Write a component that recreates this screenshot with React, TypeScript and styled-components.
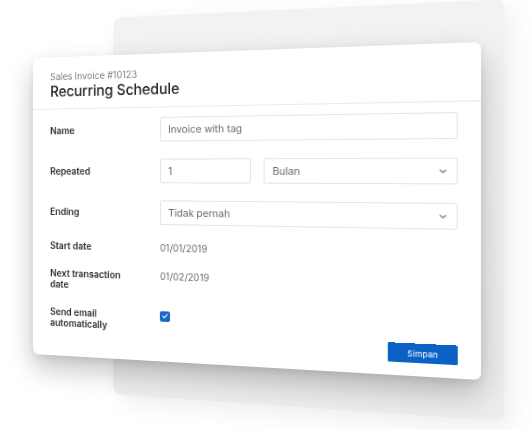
import React from 'react';
import styled, { createGlobalStyle, css } from 'styled-components';

const GlobalStyle = createGlobalStyle`
	html,
	body {
		margin: 0;
		padding: 0;
		background: #ffffff;
	}

	body {
		font-family: Inter, 'Liberation Sans', Arial, sans-serif;
		-webkit-font-smoothing: antialiased;
	}
`;

// Flat sheet -> tilted mockup plane (right side swings toward the viewer)
const TILT =
	'matrix3d(0.84398, -0.046128, 0, -0.00027013, 0, 0.910769, 0, 0, 0, 0, 1, 0, 33, 21.569, 0, 1)';

const Chevron = () => (
	<svg width="7" height="5" viewBox="0 0 7 5" fill="none">
		<polyline
			points="1,1.2 3.5,3.6 6,1.2"
			stroke="#7e7e82"
			strokeWidth="1.2"
			strokeLinecap="round"
			strokeLinejoin="round"
		/>
	</svg>
);

const Tick = () => (
	<svg width="7" height="6" viewBox="0 0 7 6" fill="none">
		<polyline
			points="1,3.2 2.8,4.8 6,1.2"
			stroke="#ffffff"
			strokeWidth="1.1"
			strokeLinecap="round"
			strokeLinejoin="round"
		/>
	</svg>
);

export default function App() {
	return (
		<>
			<GlobalStyle />
			<Stage>
				<Plane>
					<BackPanel />
					<Card>
						<Header>
							<Subtitle>Sales Invoice #10123</Subtitle>
							<Title>Recurring Schedule</Title>
						</Header>
						<Form>
							<Row>
								<Label>Name</Label>
								<Field>Invoice with tag</Field>
							</Row>
							<Row>
								<Label>Repeated</Label>
								<Pair>
									<Field>1</Field>
									<Field>
										Bulan
										<Chevron />
									</Field>
								</Pair>
							</Row>
							<Row>
								<Label>Ending</Label>
								<Field>
									Tidak pernah
									<Chevron />
								</Field>
							</Row>
							<Row $top>
								<Label>Start date</Label>
								<Value>01/01/2019</Value>
							</Row>
							<Row $top>
								<Label>
									Next transaction
									<br />
									date
								</Label>
								<Value>01/02/2019</Value>
							</Row>
							<Row $top>
								<Label>
									Send email
									<br />
									automatically
								</Label>
								<Checkbox>
									<Tick />
								</Checkbox>
							</Row>
						</Form>
						<Footer>
							<SaveButton type="button">Simpan</SaveButton>
						</Footer>
					</Card>
				</Plane>
			</Stage>
		</>
	);
}

const Stage = styled.div`
	width: 532px;
	height: 430px;
	overflow: hidden;
`;

const Plane = styled.div`
	width: 481px;
	height: 403px;
	display: grid;
	transform: ${TILT};
	transform-origin: 0 0;
`;

const BackPanel = styled.div`
	grid-area: 1 / 1;
	justify-self: end;
	width: 389px;
	height: 403px;
	border-radius: 8px;
	background: linear-gradient(180deg, #f2f2f3 0%, #ededee 100%);
	box-shadow: 6px 8px 24px rgba(0, 0, 0, 0.07);
`;

const Card = styled.div`
	grid-area: 1 / 1;
	align-self: start;
	margin-top: 40px;
	width: 460px;
	height: 325px;
	display: flex;
	flex-direction: column;
	background: #ffffff;
	border-radius: 6px;
	box-shadow: 0 14px 30px rgba(0, 0, 0, 0.24), 0 3px 8px rgba(0, 0, 0, 0.08);
`;

const Header = styled.div`
	padding: 14px 20px 8px;
	border-bottom: 1px solid #e9e9ea;
	display: flex;
	flex-direction: column;
`;

const Subtitle = styled.span`
	font-size: 10px;
	line-height: 14px;
	color: #7d7d85;
`;

const Title = styled.span`
	font-size: 15.5px;
	line-height: 20px;
	font-weight: 500;
	color: #222225;
	letter-spacing: -0.1px;
`;

const Form = styled.div`
	display: flex;
	flex-direction: column;
	gap: 18px;
	padding: 10px 21px 0 20px;
`;

const Row = styled.div<{ $top?: boolean }>(
	({ $top }) => css`
		display: grid;
		grid-template-columns: 123px 1fr;
		align-items: ${$top ? 'start' : 'center'};
	`,
);

const Label = styled.div`
	font-size: 10px;
	line-height: 12px;
	font-weight: 600;
	color: #2e2e31;
`;

const Value = styled.div`
	font-size: 10px;
	line-height: 12px;
	color: #6b6b70;
`;

const Pair = styled.div`
	display: grid;
	grid-template-columns: 96px 1fr;
	gap: 13px;
`;

const Field = styled.div`
	height: 26px;
	box-sizing: border-box;
	border: 1px solid #e4e4e6;
	border-radius: 2px;
	padding: 0 9px 0 8px;
	display: flex;
	align-items: center;
	justify-content: space-between;
	font-size: 10.5px;
	color: #68686d;
`;

const Checkbox = styled.div`
	width: 11px;
	height: 11px;
	margin-top: 0.5px;
	border-radius: 2px;
	background: #1a66cb;
	display: flex;
	align-items: center;
	justify-content: center;
`;

const Footer = styled.div`
	margin-top: -2px;
	display: flex;
	justify-content: flex-end;
	padding: 0 21px 13px;
`;

const SaveButton = styled.button`
	appearance: none;
	display: flex;
	align-items: center;
	justify-content: center;
	width: 65px;
	height: 19px;
	margin: 0;
	padding: 0;
	border: none;
	outline: none;
	border-radius: 1px;
	background: #0b62c6;
	color: #ffffff;
	font-family: inherit;
	font-size: 8px;
	font-weight: 400;
`;
